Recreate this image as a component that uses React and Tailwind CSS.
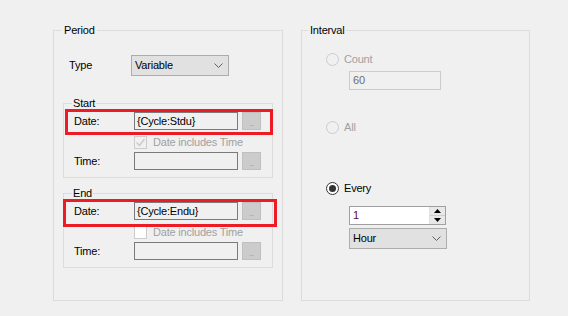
import React from "react";

const Chevron = () => (
  <svg width="9" height="5" viewBox="0 0 9 5" className="shrink-0">
    <path d="M0.5 0.5 L4.5 4.5 L8.5 0.5" fill="none" stroke="#606060" strokeWidth="1" />
  </svg>
);

const Combo = ({ value }) => (
  <div className="w-[98px] h-[21px] bg-[#e1e1e1] border border-[#adadad] flex items-center justify-between pl-[3px] pr-[5px]">
    <span>{value}</span>
    <Chevron />
  </div>
);

const DotsButton = () => (
  <div className="ml-[4px] w-[19px] h-[18px] bg-[#cccccc] border border-[#bfbfbf] flex items-end justify-center text-[9px] leading-[11px] text-[#9a9a9a]">
    ..
  </div>
);

const Field = ({ value }) => (
  <div className="w-[104px] h-[18px] border border-[#7a7a7a] bg-[#f0f0f0] flex items-center pl-[2px]">
    {value}
  </div>
);

const Check = ({ checked }) => (
  <div
    className={`w-[13px] h-[13px] border border-[#cccccc] flex items-center justify-center ${
      checked ? "bg-[#f0f0f0]" : "bg-white"
    }`}
  >
    {checked && (
      <svg width="11" height="11" viewBox="0 0 11 11">
        <path d="M1.5 5.5 L4.5 8.5 L9.5 2" fill="none" stroke="#c8c8c8" strokeWidth="1.3" />
      </svg>
    )}
  </div>
);

const DateGroup = ({ title, value, checked, redWidth, redHeight, redLeft }) => (
  <div className="relative ml-[9px] w-[210px] border border-[#dcdcdc] pt-[8px] pb-[7px]">
    <span className="absolute left-[8px] -top-[8px] bg-[#f0f0f0] px-[1px] leading-[14px]">{title}</span>
    <div className="flex items-center">
      <span className="w-[70px] pl-[10px]">Date:</span>
      <Field value={value} />
      <DotsButton />
    </div>
    <div className="flex items-center mt-[6px] pl-[70px]">
      <Check checked={checked} />
      <span className="ml-[6px] text-[#a0a0a0] leading-[13px]">Date includes Time</span>
    </div>
    <div className="flex items-center mt-[3px]">
      <span className="w-[70px] pl-[10px]">Time:</span>
      <Field value="" />
      <DotsButton />
    </div>
    <div
      className={`absolute top-[5px] border-[3px] border-[#ed1c24] ${redLeft} ${redWidth} ${redHeight}`}
    />
  </div>
);

const Radio = ({ checked, disabled, label }) => (
  <div className="flex items-center pl-[24px] h-[13px]">
    <div
      className={`w-[13px] h-[13px] rounded-full border flex items-center justify-center ${
        disabled ? "border-[#cccccc] bg-[#f0f0f0]" : "border-[#333333] bg-white"
      }`}
    >
      {checked && <div className="w-[7px] h-[7px] rounded-full bg-[#333333]" />}
    </div>
    <span className={`ml-[5px] ${disabled ? "text-[#a0a0a0]" : "text-black"}`}>{label}</span>
  </div>
);

const App = () => {
  return (
    <div
      className="w-[568px] h-[316px] bg-[#f0f0f0] flex pl-[53px] pt-[30px] gap-[18px] text-[11px] text-black tracking-[-0.2px]"
      style={{ fontFamily: '"Liberation Sans", Arial, sans-serif' }}
    >
      {/* Period */}
      <div className="relative w-[230px] h-[271px] border border-[#dcdcdc]">
        <span className="absolute left-[8px] -top-[8px] bg-[#f0f0f0] px-[2px] leading-[14px]">Period</span>
        <div className="flex items-center mt-[24px]">
          <span className="w-[77px] pl-[15px]">Type</span>
          <Combo value="Variable" />
        </div>
        <div className="mt-[27px]">
          <DateGroup
            title="Start"
            value="{Cycle:Stdu}"
            checked
            redLeft="left-[1px]"
            redWidth="w-[208px]"
            redHeight="h-[26px]"
          />
        </div>
        <div className="mt-[15px]">
          <DateGroup
            title="End"
            value="{Cycle:Endu}"
            checked={false}
            redLeft="-left-[1px]"
            redWidth="w-[214px]"
            redHeight="h-[28px]"
          />
        </div>
      </div>

      {/* Interval */}
      <div className="relative w-[229px] h-[271px] border border-[#dcdcdc]">
        <span className="absolute left-[6px] -top-[8px] bg-[#f0f0f0] px-[2px] leading-[14px]">Interval</span>
        <div className="mt-[22px]">
          <Radio disabled label="Count" />
        </div>
        <div className="mt-[5px] ml-[47px] w-[92px] h-[19px] border border-[#cccccc] bg-[#f0f0f0] flex items-center pl-[3px] text-[#6d6d6d]">
          60
        </div>
        <div className="mt-[31px]">
          <Radio disabled label="All" />
        </div>
        <div className="mt-[48px]">
          <Radio checked label="Every" />
        </div>
        <div className="mt-[11px] ml-[47px] w-[97px] h-[19px] border border-[#a0a0a0] bg-white flex">
          <span className="flex-1 flex items-center pl-[3px] text-[#5a0a2a]">1</span>
          <div className="w-[16px] flex flex-col border-l border-[#e0e0e0]">
            <div className="flex-1 bg-[#e8e8e8] border-b border-[#cfcfcf] flex items-center justify-center">
              <svg width="7" height="4" viewBox="0 0 7 4">
                <path d="M0 4 L3.5 0 L7 4 Z" fill="#000" />
              </svg>
            </div>
            <div className="flex-1 bg-[#e8e8e8] flex items-center justify-center">
              <svg width="7" height="4" viewBox="0 0 7 4">
                <path d="M0 0 L3.5 4 L7 0 Z" fill="#000" />
              </svg>
            </div>
          </div>
        </div>
        <div className="mt-[3px] ml-[47px]">
          <Combo value="Hour" />
        </div>
      </div>
    </div>
  );
};

export default App;
